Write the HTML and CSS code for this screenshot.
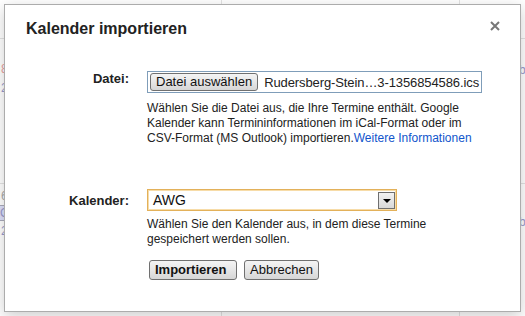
FILE: index.html
```html
<!DOCTYPE html>
<html lang="de">
<head>
  <meta charset="UTF-8">
  <title>Kalender importieren</title>
  <link rel="stylesheet" href="styles.css">
</head>
<body>
  <!-- Kalender im Hintergrund -->
  <div class="backdrop">
    <div class="hline h1"></div>
    <div class="hline h2"></div>
    <div class="vline v1"></div>
    <div class="vline v2"></div>
    <span class="ev red e1">8</span>
    <span class="ev e2">2</span>
    <span class="ev grey e3">6</span>
    <span class="ev chip e4">G</span>
    <span class="ev e5">2</span>
    <span class="ev e6">b</span>
    <span class="ev e7">b</span>
  </div>

  <div class="dialog">
    <h2 class="title">Kalender importieren</h2>
    <a class="close" href="#">
      <svg width="10" height="10" viewBox="0 0 10 10">
        <path d="M1 1 L9 9 M9 1 L1 9" stroke="#777" stroke-width="2"/>
      </svg>
    </a>

    <div class="form">
      <label class="label">Datei:</label>
      <div class="field">
        <div class="file">
          <span class="btn">Datei auswählen</span>
          <span class="filename">Rudersberg-Stein…3-1356854586.ics</span>
        </div>
        <p class="hint">Wählen Sie die Datei aus, die Ihre Termine enthält. Google Kalender kann Termininformationen im iCal-Format oder im CSV-Format (MS Outlook) importieren.<a href="#">Weitere Informationen</a></p>
      </div>

      <label class="label label-cal">Kalender:</label>
      <div class="field field-cal">
        <div class="select">
          <span class="value">AWG</span>
          <span class="arrow"></span>
        </div>
        <p class="hint hint-cal">Wählen Sie den Kalender aus, in dem diese Termine gespeichert werden sollen.</p>
        <div class="actions">
          <span class="btn btn-main">Importieren</span>
          <span class="btn">Abbrechen</span>
        </div>
      </div>
    </div>
  </div>
</body>
</html>
```

FILE: styles.css
```css
* {
  margin: 0;
  padding: 0;
  box-sizing: border-box;
}
body {
  position: relative;
  width: 525px;
  height: 316px;
  overflow: hidden;
  background-color: #fff;
  font-family: "Liberation Sans", Arial, sans-serif;
  color: #222;
}

/* Hintergrund */
.backdrop {
  position: absolute;
  top: 0;
  left: 0;
  width: 525px;
  height: 316px;
}
.hline {
  position: absolute;
  left: 0;
  width: 525px;
  height: 1px;
  background-color: #e3e3e3;
}
.h1 { top: 38px; }
.h2 { top: 183px; }
.vline {
  position: absolute;
  top: 0;
  width: 1px;
  height: 316px;
  background-color: #e3e3e3;
}
.v1 { left: 221px; }
.v2 { left: 459px; }
.ev {
  position: absolute;
  font-size: 12px;
  line-height: 14px;
  color: #99c;
}
.ev.red { color: #e9a0a0; }
.ev.grey { color: #aaa; }
.ev.chip {
  background-color: #dde0fa;
  border: 1px solid #aab;
  padding: 0 2px;
}
.e1 { left: 1px; top: 62px; }
.e2 { left: 1px; top: 81px; }
.e3 { left: 1px; top: 189px; }
.e4 { left: -3px; top: 205px; }
.e5 { left: 1px; top: 224px; }
.e6 { left: 519px; top: 63px; }
.e7 { left: 519px; top: 215px; }

/* Dialog */
.dialog {
  position: absolute;
  top: 4px;
  left: 4px;
  width: 517px;
  height: 308px;
  background-color: #fff;
  border: 1px solid #acacac;
  box-shadow: 0 4px 14px rgba(0, 0, 0, 0.2);
  padding: 14px 20px 0 21px;
}
.title {
  font-size: 16px;
  line-height: 20px;
  font-weight: bold;
  color: #222;
}
.close {
  position: absolute;
  top: 16px;
  right: 20px;
  width: 10px;
  height: 10px;
}
.close svg {
  display: block;
}

.form {
  display: grid;
  grid-template-columns: 103px 1fr;
  column-gap: 18px;
  margin-top: 32px;
}
.label {
  text-align: right;
  font-size: 13px;
  line-height: 14px;
  font-weight: bold;
  color: #222;
  padding-top: 1px;
}
.label-cal {
  margin-top: 43px;
  padding-top: 5px;
}
.field-cal {
  margin-top: 43px;
}

.file {
  display: flex;
  align-items: center;
  width: 335px;
  height: 22px;
  border: 1px solid #7f9db9;
  padding: 0 2px;
  overflow: hidden;
}
.btn {
  display: inline-block;
  height: 19px;
  line-height: 16px;
  font-size: 13px;
  color: #111;
  white-space: nowrap;
  padding: 0 6px;
  border: 1px solid #707070;
  border-radius: 3px;
  background: linear-gradient(#f4f4f4, #e6e6e6 50%, #d6d6d6);
}
.file .btn {
  flex: none;
  height: 18px;
  padding: 0 5px;
}
.filename {
  margin-left: 6px;
  font-size: 13px;
  letter-spacing: -0.1px;
  color: #222;
  white-space: nowrap;
}

.hint {
  width: 335px;
  margin-top: 8px;
  font-size: 12px;
  line-height: 15px;
  color: #222;
}
.hint a {
  color: #15c;
  text-decoration: none;
}
.hint-cal {
  margin-top: 6px;
}

.select {
  display: flex;
  align-items: center;
  justify-content: space-between;
  width: 250px;
  height: 22px;
  border: 1px solid #e3b15a;
  box-shadow: inset 0 0 0 1px #f7dca8;
  padding: 0 1px 0 5px;
}
.value {
  font-size: 14px;
  color: #111;
}
.arrow {
  position: relative;
  width: 17px;
  height: 17px;
  border: 1px solid #6f6f6f;
  background: linear-gradient(#f2f2f2, #d8d8d8);
}
.arrow::after {
  content: "";
  position: absolute;
  top: 6px;
  left: 4px;
  border-left: 4px solid transparent;
  border-right: 4px solid transparent;
  border-top: 4px solid #000;
}

.actions {
  display: flex;
  gap: 7px;
  margin-top: 13px;
  padding-left: 2px;
}
.actions .btn {
  height: 20px;
  line-height: 17px;
  padding: 0 5px;
}
.btn-main {
  font-weight: bold;
  width: 88px;
}
```
